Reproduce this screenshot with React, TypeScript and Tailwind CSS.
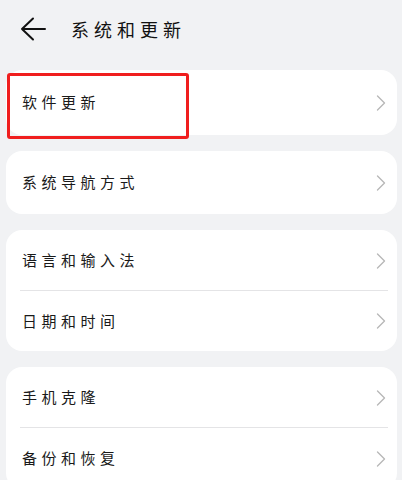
const cjk = { fontFamily: '"Noto Sans CJK SC", "Noto Sans", sans-serif' };

function Chevron() {
  return (
    <svg width="10" height="16" viewBox="0 0 10 16" fill="none" className="shrink-0">
      <path d="M1.5 1 L8.5 8 L1.5 15" stroke="#b8b8b8" strokeWidth="1.4" strokeLinecap="round" strokeLinejoin="round" />
    </svg>
  );
}

function Row({ label, h = "h-[61px]", divider = false }: { label: string; h?: string; divider?: boolean }) {
  return (
    <div className={`relative flex items-center pl-[16px] pr-[11px] ${h}`}>
      <span className="flex-1 text-[15px] tracking-[4.5px] text-[#1a1a1a]" style={cjk}>
        {label}
      </span>
      <Chevron />
      {divider && <div className="absolute bottom-0 left-[14px] right-[9px] h-px bg-[#e4e4e6]" />}
    </div>
  );
}

export default function App() {
  return (
    <div className="h-[480px] w-[402px] overflow-hidden bg-[#f1f2f4]">
      <header className="flex h-[70px] items-start pt-[15px]">
        <button className="ml-[19px] flex h-[28px] w-[28px] items-center justify-center">
          <svg width="26" height="24" viewBox="0 0 26 24" fill="none">
            <path d="M2 12 H25 M13 1.5 L2 12 L13 22.5" stroke="#111" strokeWidth="2" strokeLinecap="round" strokeLinejoin="round" />
          </svg>
        </button>
        <h1 className="ml-[24px] mt-[1px] text-[18px] font-normal tracking-[5px] text-[#111]" style={cjk}>
          系统和更新
        </h1>
      </header>

      <div className="flex flex-col gap-[16px] pl-[6px] pr-[5px]">
        <div className="relative rounded-[16px] bg-white">
          <Row label="软件更新" h="h-[65px]" />
          <div className="pointer-events-none absolute left-[1px] top-[3px] h-[66px] w-[182px] rounded-[3px] border-[3px] border-[#f01e1e]" />
        </div>

        <div className="rounded-[16px] bg-white">
          <Row label="系统导航方式" h="h-[63px]" />
        </div>

        <div className="rounded-[16px] bg-white">
          <Row label="语言和输入法" divider />
          <Row label="日期和时间" h="h-[60px]" />
        </div>

        <div className="rounded-[16px] bg-white">
          <Row label="手机克隆" divider />
          <Row label="备份和恢复" />
        </div>
      </div>
    </div>
  );
}
